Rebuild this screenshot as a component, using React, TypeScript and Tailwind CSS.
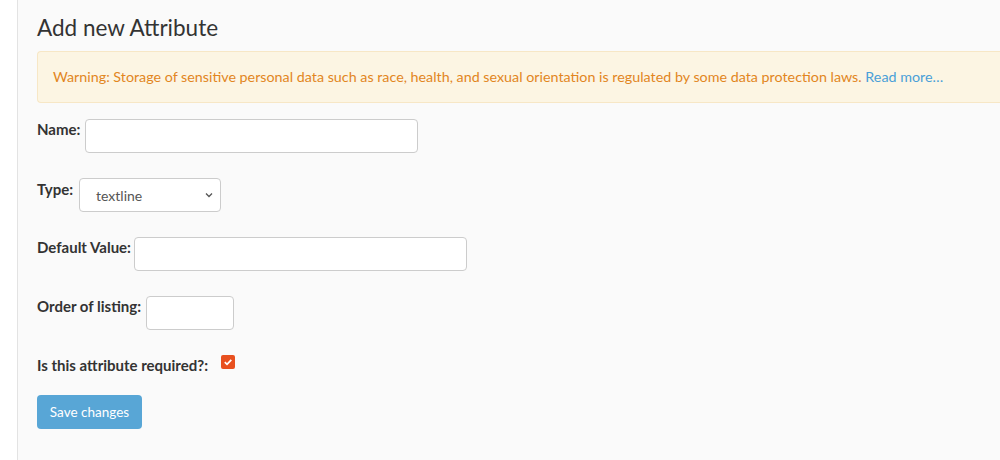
import React from "react";

export default function App() {
  const font = { fontFamily: "Lato, 'Noto Sans', sans-serif" };
  const label = "text-[15px] font-bold text-[#333] leading-[20px]";
  const input = "h-[34px] rounded-[4px] border border-[#ccc] bg-white";
  return (
    <div className="flex h-[460px] w-[1000px] overflow-hidden bg-white" style={font}>
      <div className="w-[17px] shrink-0 bg-white" />
      <div className="flex-1 border-l border-[#e3e3e3] bg-[#fafafa] pl-[19px]">
        <h1 className="mt-[14px] text-[22.5px] leading-[28px] text-[#333]">Add new Attribute</h1>
        <div className="mt-[9px] flex h-[52px] items-center rounded-l-[4px] border border-r-0 border-[#f7e7c6] bg-[#fcf5e3] pl-[15px] text-[14.3px] text-[#e2861e]">
          <span>
            Warning: Storage of sensitive personal data such as race, health, and sexual orientation is regulated by
            some data protection laws. <span className="text-[#4aa0d8]">Read more…</span>
          </span>
        </div>
        <div className="mt-[16px] flex items-start gap-[5px]">
          <span className={label}>Name:</span>
          <div className={`${input} w-[333px]`} />
        </div>
        <div className="mt-[25px] flex items-start gap-[6px]">
          <span className={`${label} pt-[1px]`}>Type:</span>
          <div className={`${input} flex w-[142px] items-center justify-between pl-[16px] pr-[6px] text-[14px] text-[#555]`}>
            <span>textline</span>
            <svg width="10" height="10" viewBox="0 0 10 10">
              <path d="M2 3.5 L5 6.5 L8 3.5" fill="none" stroke="#555" strokeWidth="1.3" />
            </svg>
          </div>
        </div>
        <div className="mt-[25px] flex items-start gap-[3px]">
          <span className={label}>Default Value:</span>
          <div className={`${input} w-[333px]`} />
        </div>
        <div className="mt-[25px] flex items-start gap-[5px]">
          <span className={label}>Order of listing:</span>
          <div className={`${input} w-[88px]`} />
        </div>
        <div className="mt-[19px] flex items-center gap-[13px]">
          <span className={`${label} pt-[6px]`}>Is this attribute required?:</span>
          <span className="flex h-[14px] w-[14px] items-center justify-center rounded-[2px] bg-[#e8501f]">
            <svg width="10" height="10" viewBox="0 0 10 10">
              <path d="M1.8 5.2 L4 7.3 L8.3 2.8" fill="none" stroke="white" strokeWidth="1.8" />
            </svg>
          </span>
        </div>
        <button className="mt-[20px] h-[34px] w-[105px] rounded-[4px] bg-[#58a6d6] text-[13.5px] text-white">
          Save changes
        </button>
      </div>
    </div>
  );
}
